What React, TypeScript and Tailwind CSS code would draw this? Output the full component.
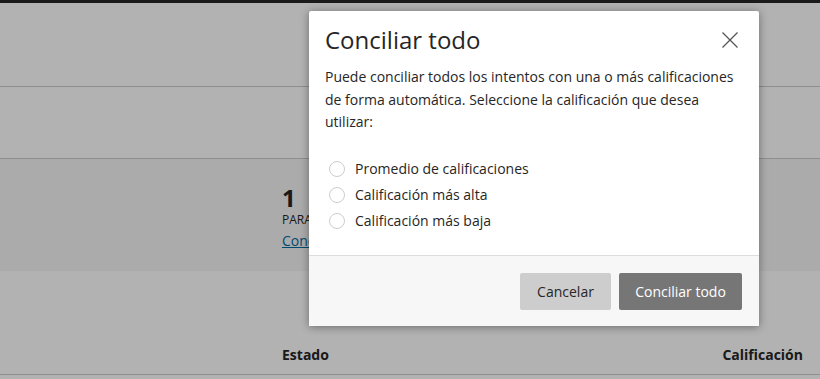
const options = [
  "Promedio de calificaciones",
  "Calificación más alta",
  "Calificación más baja",
];

function CloseIcon() {
  return (
    <svg width="16" height="16" viewBox="0 0 16 16" className="text-[#555555]">
      <path d="M0.5 0.5L15.5 15.5M15.5 0.5L0.5 15.5" stroke="currentColor" strokeWidth="1.3" fill="none" />
    </svg>
  );
}

export default function App() {
  return (
    <div
      className="relative h-[379px] w-[820px] overflow-hidden bg-white text-[#262626]"
      style={{ fontFamily: '"Open Sans", sans-serif' }}
    >
      {/* Page behind the dialog */}
      <div className="h-[3px] bg-[#262626]" />
      <div className="h-[84px] border-b border-[#cccccc]" />
      <div className="h-[72px] border-b border-[#cccccc]" />
      <div className="h-[112px] bg-[#f5f5f5] pl-[282px] pt-[24px]">
        <div className="text-[24px] font-bold leading-[29px]">1</div>
        <div className="text-[12px] leading-[16px]">PARA CONCILIAR</div>
        <a className="mt-[3px] block text-[14px] leading-[20px] text-[#006da3] underline">
          Conciliar todo
        </a>
      </div>
      <div className="flex h-[104px] items-end justify-between border-b border-[#cccccc] pb-[9px] pl-[282px] pr-[17px] text-[14px] font-bold leading-[20px]">
        <span>Estado</span>
        <span>Calificación</span>
      </div>

      {/* Overlay */}
      <div className="absolute inset-0 bg-black/30" />

      {/* Dialog */}
      <div className="absolute left-[309px] top-[11px] flex w-[450px] flex-col rounded-[2px] bg-white shadow-[0_1px_8px_rgba(0,0,0,0.4)]">
        <div className="flex items-center justify-between pl-4 pr-[21px] pt-[13px]">
          <h2 className="text-[24px] font-normal leading-[32px]">Conciliar todo</h2>
          <CloseIcon />
        </div>
        <p className="mt-[10px] px-4 text-[14px] leading-[22.5px]">
          Puede conciliar todos los intentos con una o más calificaciones de
          forma automática. Seleccione la calificación que desea utilizar:
        </p>
        <ul className="mt-[22px] px-4 pb-[21.5px]">
          {options.map((o) => (
            <li key={o} className="flex h-[26px] items-center gap-[10px] pl-1 text-[14px]">
              <span className="h-4 w-4 rounded-full border border-[#cdcdcd] bg-white" />
              <span>{o}</span>
            </li>
          ))}
        </ul>
        <div className="flex h-[71px] items-center justify-end gap-2 border-t border-[#dddddd] bg-[#f7f7f7] pr-[17px]">
          <button className="h-[37px] w-[91px] rounded-[2px] bg-[#cdcdcd] text-[14px] text-[#262626]">
            Cancelar
          </button>
          <button className="h-[37px] w-[123px] rounded-[2px] bg-[#767676] text-[14px] text-white">
            Conciliar todo
          </button>
        </div>
      </div>
    </div>
  );
}
